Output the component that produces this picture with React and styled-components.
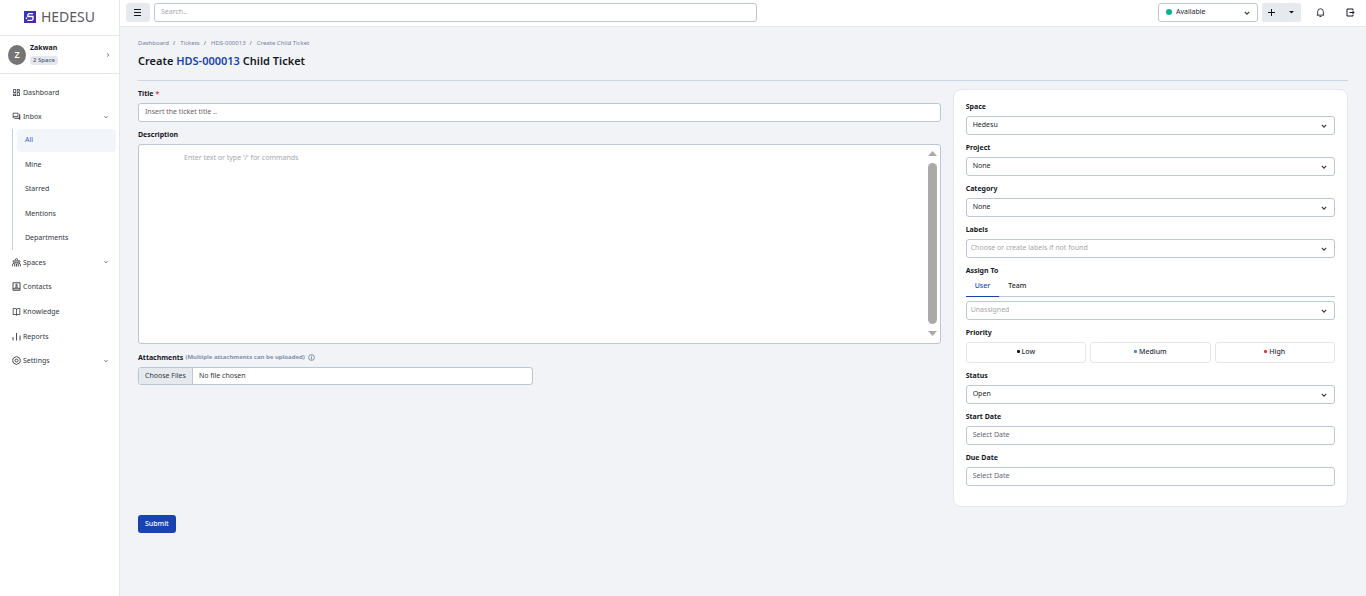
import React from "react";
import styled, { createGlobalStyle, css } from "styled-components";
import { MdDashboard, MdOutlineDashboard, MdOutlineForum } from "react-icons/md";
import { RiBookOpenLine } from "react-icons/ri";

const Global = createGlobalStyle`
  *, *::before, *::after { box-sizing: border-box; }
  body {
    margin: 0;
    background: #f2f3f7;
    color: #14181f;
    font: 7px/11px "Noto Sans", sans-serif;
  }
  button, input, select, textarea { font: inherit; color: inherit; margin: 0; }
  a { color: inherit; text-decoration: none; }
  ul, ol { list-style: none; margin: 0; padding: 0; }
`;

const Shell = styled.div`
  display: flex;
  min-height: 100vh;
`;

const Sidebar = styled.aside`
  flex: 0 0 120px;
  background: #fff;
  border-right: 1px solid #e4e7ee;
`;

const Brand = styled.a`
  display: flex;
  align-items: center;
  justify-content: center;
  gap: 5px;
  height: 36px;
  padding-bottom: 1px;
  border-bottom: 1px solid #e4e7ee;
  color: #5c5c60;
  font-size: 14px;
  font-weight: 400;
  line-height: 20px;
`;

const Account = styled.button`
  display: flex;
  align-items: center;
  gap: 4px;
  width: 100%;
  height: 38px;
  padding: 0 9px 0 8px;
  border: 0;
  border-bottom: 1px solid #e4e7ee;
  background: none;
  text-align: left;
`;

const Avatar = styled.span`
  display: grid;
  place-items: center;
  width: 18px;
  height: 20px;
  border-radius: 50%;
  background: #757575;
  color: #fff;
  font-size: 9px;
  font-weight: 600;
`;

const AccountText = styled.span`
  display: flex;
  flex: 1;
  flex-direction: column;
  align-items: flex-start;
  gap: 3px;
  padding-bottom: 2px;
  font-weight: 700;
`;

const Badge = styled.span`
  padding: 0 3px;
  border-radius: 3px;
  background: #e4e8ef;
  color: #4c596d;
  font-size: 6px;
  font-weight: 500;
  line-height: 9px;
`;

const Nav = styled.nav`
  padding-top: 6px;
`;

const NavGroup = styled.ul`
  display: grid;
  grid-auto-rows: 1fr;
  height: ${(p) => p.$height}px;
`;

const NavLink = styled.a`
  display: flex;
  align-items: center;
  gap: 2px;
  height: 100%;
  padding: 0 11px 0 12px;
  color: #33383f;

  span { flex: 1; }
`;

const SubNav = styled.ul`
  display: flex;
  flex-direction: column;
  justify-content: space-between;
  height: 121px;
  margin: 0 3px 0 12px;
  padding-left: 4px;
  border-left: 1px solid #c0ccec;
`;

const SubLink = styled.a`
  display: block;
  padding: 5px 8px 7px;
  border-radius: 4px;
  color: ${(p) => (p.$active ? "#3d63cf" : "#33383f")};
  background: ${(p) => (p.$active ? "#f2f6fb" : "none")};
`;

const Body = styled.div`
  flex: 1;
  min-width: 0;
`;

const TopBar = styled.header`
  display: flex;
  align-items: flex-start;
  gap: 4px;
  height: 27px;
  padding: 3px 6px;
  border-bottom: 1px solid #e4e7ee;
  background: #fff;
`;

const ToolButton = styled.button`
  display: grid;
  place-items: center;
  width: ${(p) => p.$width}px;
  height: 19px;
  padding: 0 1px 1px 0;
  border: 0;
  border-radius: 3px;
  background: #e6e9ee;
`;

const SplitButton = styled.div`
  display: flex;
  border-radius: 3px;
  background: #e6e9ee;
`;

const TopIcons = styled.div`
  display: flex;
  gap: 12px;
  margin-left: 7px;

  button { background: none; }
`;

const control = css`
  width: 100%;
  height: 19px;
  border: 1px solid #bdc6d6;
  border-radius: 3px;
  background: #fff;
  outline: none;
`;

const TextInput = styled.input`
  ${control}
  padding: 0 6px 2px;

  &::placeholder { color: ${(p) => p.$hint || "#5f6670"}; opacity: 1; }
`;

const SearchBox = styled(TextInput)`
  width: 50%;
  max-width: 603px;
  margin-right: auto;
`;

const SelectWrap = styled.div`
  position: relative;
  width: ${(p) => p.$width || "100%"};

  > svg { position: absolute; right: 8px; top: 7px; pointer-events: none; }
`;

const SelectBox = styled.select`
  ${control}
  appearance: none;
  padding: 0 16px 2px ${(p) => p.$inset || 6}px;
  color: ${(p) => (p.$muted ? "#a3a7ae" : "#22272e")};
`;

const StatusDot = styled.span`
  position: absolute;
  left: 8px;
  top: 6px;
  width: 6px;
  height: 6px;
  border-radius: 50%;
  background: #06b48c;
`;

const Main = styled.main`
  padding: 11px 18px 0;
`;

const Crumbs = styled.ol`
  display: flex;
  color: #76829a;
  font-size: 6px;

  li + li::before { content: "/"; margin: 0 5px 0 4px; color: #555d6b; }
`;

const PageTitle = styled.h1`
  margin: 0;
  padding: 4px 0 11px;
  border-bottom: 1px solid #cdd5e0;
  font-size: 11px;
  font-weight: 600;
  line-height: 16px;

  a { color: #1743b3; }
`;

const Columns = styled.form`
  display: grid;
  grid-template-columns: repeat(12, minmax(0, 1fr));
  column-gap: 12px;
  align-items: start;
`;

const MainColumn = styled.div`
  grid-column: span 8;
  padding-top: 7px;
`;

const Card = styled.section`
  grid-column: span 4;
  margin-top: 8px;
  padding: 11px 12px 13px;
  border: 1px solid #e4e7ee;
  border-radius: 8px;
  background: #fff;
`;

const FieldBlock = styled.div`
  margin-bottom: 7px;
`;

const Label = styled.label`
  display: flex;
  align-items: center;
  gap: 2px;
  margin-bottom: ${(p) => (p.$tight ? 1 : 4)}px;
  font-weight: 700;
`;

const Required = styled.span`
  color: #e5393f;
`;

const Note = styled.span`
  display: flex;
  align-items: center;
  gap: 3px;
  height: 12px;
  color: #8291ad;
  font-size: 6px;
`;

const Editor = styled.div`
  display: flex;
  height: 200px;
  border: 1px solid #bdc6d6;
  border-radius: 3px;
  background: #fff;
`;

const EditorText = styled.textarea`
  flex: 1;
  padding: 7px 45px;
  border: 0;
  background: none;
  outline: none;
  resize: none;

  &::placeholder { color: #a3a7ae; opacity: 1; }
`;

const ScrollTrack = styled.div`
  display: flex;
  flex-direction: column;
  align-items: center;
  gap: 7px;
  padding: 6px 3px 7px;
`;

const ScrollThumb = styled.span`
  flex: 1;
  width: 9px;
  border-radius: 5px;
  background: #aca9a9;
`;

const FileInput = styled.input`
  display: block;
  width: calc(50% - 6px);
  height: 18px;
  border: 1px solid #bdc6d6;
  border-radius: 3px;
  background: #fff;
  color: #33383f;
  line-height: 16px;

  &::file-selector-button {
    height: 16px;
    margin: 0 6px 0 0;
    padding: 0 6px;
    border: 0;
    border-right: 1px solid #bdc6d6;
    background: #e6e9ee;
    color: #33383f;
    font: inherit;
  }
`;

const Submit = styled.button`
  margin-top: 123px;
  height: 18px;
  padding: 0 7px 1px;
  border: 0;
  border-radius: 3px;
  background: #1743b3;
  color: #fff;
  font-weight: 500;
`;

const Tabs = styled.div`
  display: flex;
  height: 20px;
  margin-bottom: 4px;
  border-bottom: 1px solid #bdc6d6;
`;

const Tab = styled.button`
  height: 20px;
  padding: 0 9px 2px;
  border: 0;
  border-bottom: 1px solid ${(p) => (p.$active ? "#1743b3" : "transparent")};
  background: none;
  color: ${(p) => (p.$active ? "#1743b3" : "#22272e")};
  font-weight: 500;
`;

const Priorities = styled.div`
  display: grid;
  grid-template-columns: repeat(3, 1fr);
  gap: 4px;
`;

const Priority = styled.button`
  display: flex;
  align-items: center;
  justify-content: center;
  gap: 2px;
  height: 21px;
  padding: 0 0 2px;
  border: 1px solid #e4e7ee;
  border-radius: 3px;
  background: #fff;
  color: #2b3037;
  font-weight: 500;

  &::before {
    content: "";
    width: 3px;
    height: 3px;
    border-radius: 1px;
    background: ${(p) => p.$dot};
  }
`;

const Chevron = ({ size = 6, turn = 0 }) => (
  <svg width={size} height={size} viewBox="0 0 6 6" fill="none" stroke="#33383f" strokeWidth="1.1" aria-hidden="true">
    <path d="M0.8 1.800 3 4.200 5.200 1.800" transform={`rotate(${turn} 3 3)`} />
  </svg>
);

const LogoMark = () => (
  <svg width="12" height="12" viewBox="0 0 12 12" aria-hidden="true">
    <defs>
      <linearGradient id="mark" x1="0" y1="0" x2="1" y2="1">
        <stop offset="0" stopColor="#2540b8" />
        <stop offset="1" stopColor="#5a20b0" />
      </linearGradient>
    </defs>
    <rect width="12" height="12" fill="url(#mark)" />
    <path d="M9 2.600H5L3.800 3.800V5.500H9V8.200L7.800 9.400H3.400M2.400 6.500V8" fill="none" stroke="#fff" strokeWidth="1.300" />
  </svg>
);

const NavGlyph = styled.svg.attrs({
  width: 9,
  height: 9,
  viewBox: "0 0 18 18",
  fill: "none",
  stroke: "#33383f",
  strokeWidth: 1.8,
  "aria-hidden": true,
})``;

const People = () => (
  <NavGlyph>
    <circle cx="9" cy="3.500" r="2.200" />
    <circle cx="4" cy="7" r="1.800" />
    <circle cx="14" cy="7" r="1.800" />
    <path d="M5.500 17V12a3.500 3.500 0 0 1 7 0v5M1.200 16.500V13a3 3 0 0 1 3-2.500M16.800 16.500V13a3 3 0 0 0-3-2.500M9 11v6" />
  </NavGlyph>
);

const ContactCard = () => (
  <NavGlyph>
    <path d="M2 1.500H16V16.500H2zM2 13.500H16" />
    <circle cx="9" cy="6" r="1.600" />
    <path d="M5.500 11c.5-3 6.500-3 7 0z" fill="#33383f" strokeWidth=".5" />
  </NavGlyph>
);

const Bars = () => (
  <NavGlyph>
    <path d="M2 10v7M9 2v15M16 7v10" />
  </NavGlyph>
);

const Gear = () => (
  <NavGlyph>
    <path d="M6 2.500 9 1l3 1.500 4 2.500.5 4-.5 4-4 2.500L9 17l-3-1.500L2 13l-.5-4L2 5z" strokeLinejoin="round" />
    <circle cx="9" cy="9" r="3" />
  </NavGlyph>
);

const LogOut = () => (
  <svg width="9" height="9" viewBox="0 0 18 18" fill="none" stroke="#14181f" strokeWidth="2" aria-hidden="true">
    <path d="M14 5V2H2V16H14V13M7 9H16M13 6l3 3-3 3" />
  </svg>
);

const Bell = () => (
  <svg width="9" height="9" viewBox="0 0 24 24" fill="none" stroke="#22272e" strokeWidth="2.400" aria-hidden="true">
    <path d="M2 19h20M4.500 19V9.500a7.500 7.500 0 0 1 15 0V19M9 22.500h6" />
  </svg>
);

const Info = () => (
  <svg width="7" height="7" viewBox="0 0 7 7" fill="none" stroke="#8291ad" aria-hidden="true">
    <circle cx="3.500" cy="3.500" r="2.900" />
    <path d="M3.500 1.600v.900M3.500 3v2.500" />
  </svg>
);

const Arrow = ({ down }) => (
  <svg width="9" height="5" viewBox="0 0 9 5" fill="#aca9a9" aria-hidden="true">
    <path d={down ? "M0 0h9L4.500 5z" : "M0 5h9L4.500 0z"} />
  </svg>
);

function NavItem({ icon, expandable, children }) {
  return (
    <li>
      <NavLink href="#">
        {icon}
        <span>{children}</span>
        {expandable && <Chevron size={4} />}
      </NavLink>
    </li>
  );
}

function SelectField({ id, label, value, muted, inset }) {
  return (
    <FieldBlock>
      {label && <Label htmlFor={id}>{label}</Label>}
      <SelectWrap>
        <SelectBox id={id} $muted={muted} $inset={inset} aria-label={label ? undefined : "Assignee"}>
          <option>{value}</option>
        </SelectBox>
        <Chevron />
      </SelectWrap>
    </FieldBlock>
  );
}

function TextField({ id, label, placeholder, required }) {
  return (
    <FieldBlock>
      <Label htmlFor={id}>
        {label}
        {required && <Required>*</Required>}
      </Label>
      <TextInput id={id} placeholder={placeholder} />
    </FieldBlock>
  );
}

export default function App() {
  return (
    <>
      <Global />
      <Shell>
        <Sidebar>
          <Brand href="#">
            <LogoMark />
            HEDESU
          </Brand>
          <Account type="button">
            <Avatar>Z</Avatar>
            <AccountText>
              Zakwan
              <Badge>2 Space</Badge>
            </AccountText>
            <Chevron size={4} turn={-90} />
          </Account>
          <Nav>
            <NavGroup $height={49}>
              <NavItem icon={<MdOutlineDashboard size={9} />}>Dashboard</NavItem>
              <NavItem icon={<MdOutlineForum size={9} />} expandable>Inbox</NavItem>
            </NavGroup>
            <SubNav>
              {["All", "Mine", "Starred", "Mentions", "Departments"].map((name) => (
                <li key={name}>
                  <SubLink href="#" $active={name === "All"}>{name}</SubLink>
                </li>
              ))}
            </SubNav>
            <NavGroup $height={123}>
              <NavItem icon={<People />} expandable>Spaces</NavItem>
              <NavItem icon={<ContactCard />}>Contacts</NavItem>
              <NavItem icon={<RiBookOpenLine size={9} />}>Knowledge</NavItem>
              <NavItem icon={<Bars />}>Reports</NavItem>
              <NavItem icon={<Gear />} expandable>Settings</NavItem>
            </NavGroup>
          </Nav>
        </Sidebar>

        <Body>
          <TopBar>
            <ToolButton type="button" $width={24} aria-label="Toggle menu">
              <svg width="7" height="7" viewBox="0 0 7 7" stroke="#14181f" aria-hidden="true">
                <path d="M0 .5h7M0 3.500h7M0 6.500h7" />
              </svg>
            </ToolButton>
            <SearchBox type="search" aria-label="Search" placeholder="Search.." $hint="#a3a7ae" />
            <SelectWrap $width="100px">
              <SelectBox $inset={17} aria-label="Availability">
                <option>Available</option>
              </SelectBox>
              <StatusDot />
              <Chevron />
            </SelectWrap>
            <SplitButton>
              <ToolButton type="button" $width={20} aria-label="Create">
                <svg width="7" height="7" viewBox="0 0 7 7" stroke="#14181f" aria-hidden="true">
                  <path d="M0 3.500h7M3.500 0v7" />
                </svg>
              </ToolButton>
              <ToolButton type="button" $width={19} aria-label="More create options">
                <svg width="5" height="5" viewBox="0 0 5 5" fill="#14181f" aria-hidden="true">
                  <path d="M0 1h5L2.500 3.500z" />
                </svg>
              </ToolButton>
            </SplitButton>
            <TopIcons>
              <ToolButton type="button" $width={18} aria-label="Notifications"><Bell /></ToolButton>
              <ToolButton type="button" $width={18} aria-label="Log out"><LogOut /></ToolButton>
            </TopIcons>
          </TopBar>

          <Main>
            <Crumbs>
              {["Dashboard", "Tickets", "HDS-000013", "Create Child Ticket"].map((name) => (
                <li key={name}><a href="#">{name}</a></li>
              ))}
            </Crumbs>
            <PageTitle>
              Create <a href="#">HDS-000013</a> Child Ticket
            </PageTitle>

            <Columns onSubmit={(e) => e.preventDefault()}>
              <MainColumn>
                <TextField id="title" label="Title" placeholder="Insert the ticket title .." required />
                <FieldBlock>
                  <Label htmlFor="description">Description</Label>
                  <Editor>
                    <EditorText id="description" placeholder="Enter text or type '/' for commands" />
                    <ScrollTrack aria-hidden="true">
                      <Arrow />
                      <ScrollThumb />
                      <Arrow down />
                    </ScrollTrack>
                  </Editor>
                </FieldBlock>
                <FieldBlock>
                  <Label htmlFor="files">
                    Attachments
                    <Note>(Multiple attachments can be uploaded) <Info /></Note>
                  </Label>
                  <FileInput id="files" type="file" multiple />
                </FieldBlock>
                <Submit type="submit">Submit</Submit>
              </MainColumn>

              <Card>
                <SelectField id="space" label="Space" value="Hedesu" />
                <SelectField id="project" label="Project" value="None" />
                <SelectField id="category" label="Category" value="None" />
                <SelectField id="labels" label="Labels" value="Choose or create labels if not found" muted inset={4} />
                <Label as="div" $tight>Assign To</Label>
                <Tabs role="tablist">
                  <Tab type="button" role="tab" aria-selected="true" $active>User</Tab>
                  <Tab type="button" role="tab" aria-selected="false">Team</Tab>
                </Tabs>
                <SelectField id="assignee" value="Unassigned" muted inset={4} />
                <FieldBlock>
                  <Label as="div">Priority</Label>
                  <Priorities>
                    <Priority type="button" $dot="#14181f">Low</Priority>
                    <Priority type="button" $dot="#2e90ea">Medium</Priority>
                    <Priority type="button" $dot="#ee3340">High</Priority>
                  </Priorities>
                </FieldBlock>
                <SelectField id="status" label="Status" value="Open" />
                <TextField id="start" label="Start Date" placeholder="Select Date" />
                <TextField id="due" label="Due Date" placeholder="Select Date" />
              </Card>
            </Columns>
          </Main>
        </Body>
      </Shell>
    </>
  );
}
